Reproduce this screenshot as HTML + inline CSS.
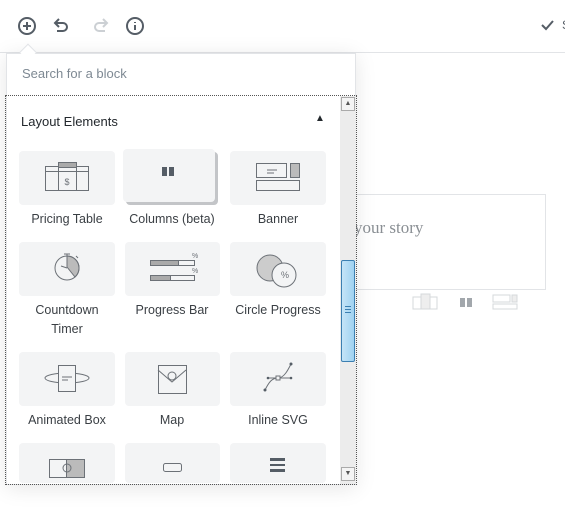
<!DOCTYPE html>
<html><head><style>
*{box-sizing:border-box;margin:0;padding:0}
body{width:565px;height:509px;background:#fff;font-family:"Liberation Sans",sans-serif;position:relative;overflow:hidden;color:#23282d}
.a{position:absolute}
.tile{position:absolute;width:96px;height:54px;background:#f3f4f5;border-radius:4px}
.lbl{position:absolute;width:110px;text-align:center;font-size:12.5px;color:#3a3f44;line-height:19px}
</style></head><body>
<div class="a" style="left:0;top:52px;width:565px;height:1px;background:#e2e4e7"></div>
<svg class="a" style="left:15px;top:14px" width="140" height="24" viewBox="0 0 140 24">
<g fill="none" stroke="#555d66" stroke-width="2">
<circle cx="12" cy="12" r="8"/><path d="M12 8v8M8 12h8"/>
<path d="M41 9h7a4 4 0 0 1 0 8h-6" /><path d="M44 5l-4 4 4 4"/>
<circle cx="120" cy="12" r="8"/><path d="M120 11v5M120 8v1"/>
</g>
<g fill="none" stroke="#ccd0d4" stroke-width="2"><path d="M91 9h-7a4 4 0 0 0 0 8h6"/><path d="M88 5l4 4-4 4"/></g>
</svg>
<svg class="a" style="left:540px;top:19px" width="14" height="12"><path d="M2 6l4 4 7-8" fill="none" stroke="#555d66" stroke-width="2"/></svg>
<div class="a" style="left:562px;top:18px;font-size:12px;color:#555d66">S</div>
<div class="a" style="left:350px;top:194px;width:196px;height:96px;border:1px solid #e2e4e7"></div>
<div class="a" style="left:354px;top:218px;font-family:'Liberation Serif',serif;font-size:17px;color:#8a8f94">your story</div>
<svg class="a" style="left:410px;top:292px" width="110" height="20"><g fill="none" stroke="#d5d8db"><rect x="3" y="5" width="24" height="12"/><rect x="11" y="2" width="9" height="15" fill="#eee"/></g><rect x="50" y="6" width="5" height="9" fill="#a2a7ac"/><rect x="57" y="6" width="5" height="9" fill="#a2a7ac"/><g fill="none" stroke="#d5d8db"><rect x="83" y="3" width="17" height="7"/><rect x="102" y="3" width="5" height="7" fill="#eee"/><rect x="83" y="12" width="24" height="5"/></g></svg>
<div class="a" style="left:6px;top:53px;width:350px;height:432px;background:#fff;border:1px solid #e2e4e7;box-shadow:0 3px 20px rgba(0,0,0,.1)"></div>
<div class="a" style="left:22px;top:46px;width:12px;height:12px;background:#fff;border-left:1px solid #e2e4e7;border-top:1px solid #e2e4e7;transform:rotate(45deg)"></div>
<div class="a" style="left:22px;top:66px;font-size:13px;color:#7e8993">Search for a block</div>
<div class="a" style="left:5px;top:95px;width:352px;height:390px;border:1px dotted #555"></div>
<div class="a" style="left:21px;top:114px;font-size:13px;color:#23282d">Layout Elements</div>
<div class="a" style="left:315px;top:113px;font-size:10px">▲</div>
<div class="a" style="left:340px;top:96px;width:16px;height:388px;background:#ececec"></div>
<div class="a" style="left:341px;top:97px;width:14px;height:14px;background:#f4f4f4;border:1px solid #aaa;font-size:7px;text-align:center;line-height:12px;color:#555">▲</div>
<div class="a" style="left:341px;top:467px;width:14px;height:14px;background:#f4f4f4;border:1px solid #aaa;font-size:7px;text-align:center;line-height:12px;color:#555">▼</div>
<div class="a" style="left:341px;top:260px;width:14px;height:102px;background:linear-gradient(90deg,#c5e4f7,#9fd2f1);border:1px solid #3c7fb1;border-radius:2px"></div>
<div class="a" style="left:345px;top:306px;width:6px;height:7px;border-top:1px solid #3c7fb1;border-bottom:1px solid #3c7fb1"><div style="margin-top:2px;height:1px;background:#3c7fb1"></div></div>
<div class="tile" style="left:19px;top:151px"></div>
<div class="tile" style="left:123px;top:149px;width:92px;height:53px;box-shadow:3px 3px 0 #c3c5c8"></div>
<div class="tile" style="left:230px;top:151px"></div>
<div class="tile" style="left:19px;top:242px"></div>
<div class="tile" style="left:125px;top:242px;width:95px"></div>
<div class="tile" style="left:230px;top:242px"></div>
<div class="tile" style="left:19px;top:352px"></div>
<div class="tile" style="left:125px;top:352px;width:95px"></div>
<div class="tile" style="left:230px;top:352px"></div>
<div class="tile" style="left:19px;top:443px;height:40px"></div>
<div class="tile" style="left:125px;top:443px;width:95px;height:40px"></div>
<div class="tile" style="left:230px;top:443px;height:40px"></div>
<svg class="a" style="left:0;top:140px" width="340" height="344"><g fill="none" stroke="#6c7177" stroke-width="1">
<rect x="45.5" y="26.5" width="43" height="24"/><rect x="58.5" y="22.5" width="18" height="28"/><path d="M45.5 31.5h43M58.5 27.5h18"/><rect x="58.5" y="22.5" width="18" height="5" fill="#aaa"/>
<rect x="256.5" y="23.5" width="30" height="14"/><rect x="290.5" y="23.5" width="9" height="14" fill="#bbb"/><rect x="256.5" y="40.5" width="43" height="10"/><path d="M267 30h10M267 33h7"/>
<path d="M67 127V116a12 12 0 0 1 8 21z" fill="#bbb"/><circle cx="67" cy="128" r="12"/><path d="M64 114h6M67 114v2M76 116l2 2"/><path d="M67 128l-6-2"/>
<rect x="150.5" y="120.5" width="44" height="5"/><rect x="150.5" y="120.5" width="28" height="5" fill="#aaa"/><rect x="150.5" y="135.5" width="44" height="5"/><rect x="150.5" y="135.5" width="20" height="5" fill="#aaa"/>
<circle cx="270" cy="128" r="13" fill="#ccc"/><circle cx="284" cy="135" r="12" fill="#f3f4f5"/>
<ellipse cx="67" cy="238" rx="22" ry="5"/><rect x="58.5" y="225.5" width="17" height="26" fill="#f3f4f5"/><path d="M62 237h10M62 240h6"/>
<rect x="158.5" y="225.5" width="28" height="28"/><path d="M158 230l14 12 14-12"/><circle cx="172" cy="236" r="4"/>
<path d="M265 250c4-8 7-12 13-12s10-8 13-14M268 238h23"/><rect x="276" y="236" width="4" height="4" fill="#f3f4f5"/>
<rect x="49.5" y="319.5" width="35" height="18"/><rect x="66.5" y="319.5" width="18" height="18" fill="#bbb"/><circle cx="67" cy="328" r="4"/>
<rect x="163.5" y="323.5" width="18" height="8" rx="2"/>
</g><g fill="#555d66"><circle cx="265" cy="250" r="1.5"/><circle cx="291" cy="224" r="1.5"/><circle cx="268" cy="238" r="1.3"/><circle cx="291" cy="238" r="1.3"/><rect x="162" y="27" width="5" height="9"/><rect x="169" y="27" width="5" height="9"/><rect x="270" y="318" width="15" height="3"/><rect x="270" y="324" width="15" height="2"/><rect x="270" y="329" width="15" height="3"/></g>
<text x="67" y="45" font-size="9" text-anchor="middle" fill="#6c7177" font-family="Liberation Sans">$</text>
<text x="285" y="138" font-size="9" text-anchor="middle" fill="#6c7177" font-family="Liberation Sans">%</text>
<text x="192" y="118" font-size="7" fill="#6c7177" font-family="Liberation Sans">%</text><text x="192" y="133" font-size="7" fill="#6c7177" font-family="Liberation Sans">%</text>
</svg>
<div class="lbl" style="left:12px;top:210px">Pricing Table</div>
<div class="lbl" style="left:117px;top:210px">Columns (beta)</div>
<div class="lbl" style="left:223px;top:210px">Banner</div>
<div class="lbl" style="left:12px;top:301px">Countdown<br>Timer</div>
<div class="lbl" style="left:117px;top:301px">Progress Bar</div>
<div class="lbl" style="left:223px;top:301px">Circle Progress</div>
<div class="lbl" style="left:12px;top:411px">Animated Box</div>
<div class="lbl" style="left:117px;top:411px">Map</div>
<div class="lbl" style="left:223px;top:411px">Inline SVG</div>
</body></html>
